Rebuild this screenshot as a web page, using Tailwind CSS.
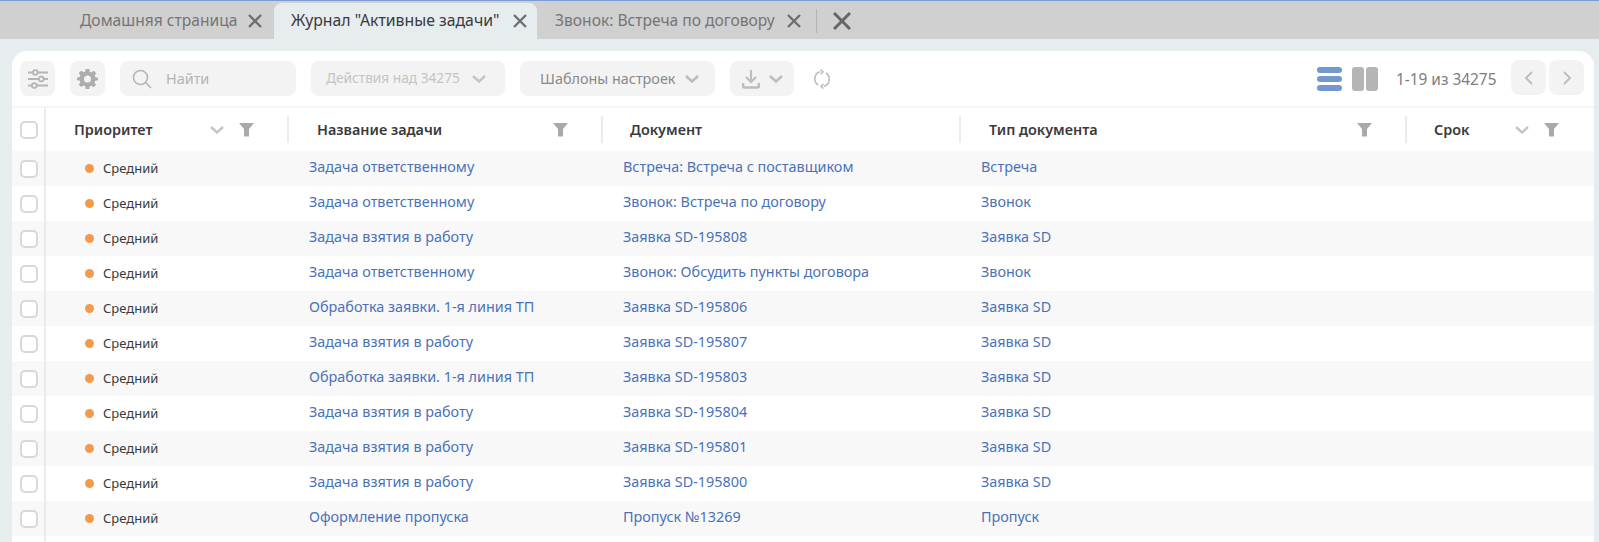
<!DOCTYPE html>
<html lang="ru">
<head>
  <meta charset="UTF-8">
  <title>Журнал</title>
  <script src="https://cdn.jsdelivr.net/npm/@tailwindcss/browser@4"></script>
</head>
<body class="bg-[#e7ecef] font-['Noto_Sans',sans-serif] h-[542px] overflow-hidden">
  <!-- Tabs -->
  <div class="h-[39px] border-t border-[#7a9bd6] bg-[#e7ecef]">
    <div class="flex h-[38px] pt-[2px] bg-[#d0d0d0] text-[15.6px] text-[#757575]">
      <div class="w-[274px] flex items-center pl-[80px] rounded-br-lg bg-[#d0d0d0]">
        <span class="w-[168px] whitespace-nowrap">Домашняя страница</span>
        <svg class="w-[14px] h-[14px]" viewBox="0 0 14 14" stroke="#6f6f6f" stroke-width="2.4"><path d="M1 1l12 12M13 1L1 13"/></svg>
      </div>
      <div class="w-[263px] flex items-center pl-[17px] rounded-t-lg bg-[#e7ecef] text-[15.8px] text-[#3a3a3a]">
        <span class="w-[222px] whitespace-nowrap">Журнал "Активные задачи"</span>
        <svg class="w-[14px] h-[14px]" viewBox="0 0 14 14" stroke="#6f6f6f" stroke-width="2.4"><path d="M1 1l12 12M13 1L1 13"/></svg>
      </div>
      <div class="flex items-center pl-[18px] rounded-bl-lg bg-[#d0d0d0]">
        <span class="w-[232px] whitespace-nowrap">Звонок: Встреча по договору</span>
        <svg class="w-[14px] h-[14px]" viewBox="0 0 14 14" stroke="#6f6f6f" stroke-width="2.4"><path d="M1 1l12 12M13 1L1 13"/></svg>
        <div class="w-px h-[24px] bg-[#b4b4b4] ml-[15px] mr-[16px]"></div>
        <svg class="w-[18px] h-[18px]" viewBox="0 0 18 18" stroke="#666" stroke-width="3"><path d="M1 1l16 16M17 1L1 17"/></svg>
      </div>
    </div>
  </div>

  <!-- Card -->
  <div class="ml-[12px] mr-[5px] mt-[12px] bg-white rounded-t-[15px] overflow-hidden h-[491px]">
    <!-- Toolbar -->
    <div class="h-[57px] border-b-2 border-[#f5f5f5] flex items-start pt-[10px] pl-[8px] pr-[10px] text-[14.4px]">
      <button class="w-[35px] h-[35px] rounded-lg bg-[#f3f3f3] flex items-center justify-center">
        <svg class="w-[20px] h-[20px]" viewBox="0 0 20 20" fill="none" stroke="#b5b5b5" stroke-width="1.8"><path d="M0 3.500h4.500M10 3.500h10M0 10h10.500M16 10h4M0 16.500h3.500M9 16.500h11"/><circle cx="7.300" cy="3.500" r="2.400"/><circle cx="13.300" cy="10" r="2.400"/><circle cx="6.300" cy="16.500" r="2.400"/></svg>
      </button>
      <button class="w-[35px] h-[35px] ml-[15px] rounded-lg bg-[#f3f3f3] flex items-center justify-center">
        <svg class="w-[21px] h-[21px]" viewBox="0 0 24 24" fill="#adadad"><path fill-rule="evenodd" d="M10 1h4l.6 3.200 1.900.8 2.700-1.800 2.800 2.800-1.800 2.700.8 1.900L24 11v3l-3.200.6-.8 1.900 1.800 2.700-2.800 2.800-2.700-1.800-1.900.8L14 24h-4l-.6-3.200-1.900-.8-2.700 1.800L2 19l1.800-2.700-.8-1.900L0 14v-3l3-.6.8-1.900L2 5.800 4.800 3l2.700 1.800 1.900-.8zM12 8.500a4 4 0 1 0 0 8 4 4 0 0 0 0-8z"/></svg>
      </button>
      <div class="w-[176px] h-[35px] ml-[15px] rounded-lg bg-[#f3f3f3] flex items-center pl-[12px] text-[#b4b4b4]">
        <svg class="w-[20px] h-[20px]" viewBox="0 0 20 20" fill="none" stroke="#b5b5b5" stroke-width="1.6"><circle cx="8.500" cy="8.500" r="7"/><path d="M13.500 13.500l5.500 5.500"/></svg>
        <span class="ml-[14px]">Найти</span>
      </div>
      <div class="w-[194px] h-[35px] ml-[15px] rounded-lg bg-[#f3f3f3] flex items-center pl-[15px] text-[13.7px] text-[#c4c4c4]">
        <span class="whitespace-nowrap">Действия над 34275</span>
        <svg class="w-[14px] h-[8px] ml-[12px]" viewBox="0 0 14 8" fill="none" stroke="#c4c4c4" stroke-width="2.400"><path d="M1 1l6 5.500L13 1"/></svg>
      </div>
      <div class="w-[195px] h-[35px] ml-[15px] rounded-lg bg-[#f3f3f3] flex items-center pl-[20px] text-[#8a8a8a]">
        <span class="whitespace-nowrap">Шаблоны настроек</span>
        <svg class="w-[14px] h-[8px] ml-[10px]" viewBox="0 0 14 8" fill="none" stroke="#bbb" stroke-width="2.400"><path d="M1 1l6 5.500L13 1"/></svg>
      </div>
      <div class="w-[64px] h-[35px] ml-[15px] rounded-lg bg-[#f3f3f3] flex items-center pl-[12px]">
        <svg class="w-[18px] h-[20px]" viewBox="0 0 18 20" fill="none" stroke="#bdbdbd" stroke-width="2.200"><path d="M9 1v11M4 8l5 5 5-5"/><path stroke-width="2.600" d="M1 14v2.500a2 2 0 0 0 2 2h12a2 2 0 0 0 2-2V14"/></svg>
        <svg class="w-[14px] h-[8px] ml-[9px]" viewBox="0 0 14 8" fill="none" stroke="#bbb" stroke-width="2.400"><path d="M1 1l6 5.500L13 1"/></svg>
      </div>
      <svg class="w-[18px] h-[20px] ml-[19px] mt-[8px]" viewBox="0 0 18 20" fill="none" stroke="#bdbdbd" stroke-width="1.600"><path d="M5 16a7.500 7.500 0 0 1 2-13.300M13 4a7.500 7.500 0 0 1-2 13.300"/><path d="M7.500 0.500L10 3 7.500 5M10.500 15L8 17.500l2.500 2"/></svg>

      <div class="ml-auto flex items-start">
        <div class="flex flex-col gap-[3px] mt-[6px] w-[25px]">
          <div class="h-[6px] rounded-[3px] bg-[#7597cf]"></div>
          <div class="h-[6px] rounded-[3px] bg-[#7597cf]"></div>
          <div class="h-[6px] rounded-[3px] bg-[#7597cf]"></div>
        </div>
        <div class="flex gap-[2px] mt-[6px] ml-[10px]">
          <div class="w-[12px] h-[24px] rounded-[3px] bg-[#b5b5b5]"></div>
          <div class="w-[12px] h-[24px] rounded-[3px] bg-[#b5b5b5]"></div>
        </div>
        <span class="ml-[18px] w-[115px] leading-[37px] text-[15.4px] text-[#7d7d7d] whitespace-nowrap">1-19 из 34275</span>
        <button class="w-[35px] h-[35px] -mt-px rounded-lg bg-[#f3f3f3] flex items-center justify-center">
          <svg class="w-[8px] h-[14px]" viewBox="0 0 8 14" fill="none" stroke="#bbb" stroke-width="1.800"><path d="M7 1L1 7l6 6"/></svg>
        </button>
        <button class="w-[35px] h-[35px] -mt-px ml-[3px] rounded-lg bg-[#f3f3f3] flex items-center justify-center">
          <svg class="w-[8px] h-[14px]" viewBox="0 0 8 14" fill="none" stroke="#bbb" stroke-width="1.800"><path d="M1 1l6 6-6 6"/></svg>
        </button>
      </div>
    </div>

    <!-- Table -->
    <div id="table" class="text-[14.4px]">
      <div class="h-[43px] grid grid-cols-[34px_243px_314px_358px_446px_1fr] items-center">
        <div class="h-full border-r-2 border-[#e7ecef] pl-[8px] flex items-center"><span class="block w-[18px] h-[18px] rounded-[5px] border-2 border-[#d8d8d8]"></span></div>
        <div class="h-[27px] border-r-2 border-[#e7ecef] flex items-center pl-[28px] pr-[33px] font-semibold text-[#3a3a3a]">
          <span class="mr-auto">Приоритет</span>
          <svg class="w-[14px] h-[8px] mr-[15px]" viewBox="0 0 14 8" fill="none" stroke="#c4c4c4" stroke-width="2.400"><path d="M1 1l6 5.500L13 1"/></svg>
          <svg class="w-[15px] h-[14px]" viewBox="0 0 15 14" fill="#a9a9a9"><path d="M0 0h15L10 6v7.500H5V6z"/></svg>
        </div>
        <div class="h-[27px] border-r-2 border-[#e7ecef] flex items-center pl-[28px] pr-[33px] font-semibold text-[#3a3a3a]">
          <span class="mr-auto">Название задачи</span>
          <svg class="w-[15px] h-[14px]" viewBox="0 0 15 14" fill="#a9a9a9"><path d="M0 0h15L10 6v7.500H5V6z"/></svg>
        </div>
        <div class="h-[27px] border-r-2 border-[#e7ecef] flex items-center pl-[27px] font-semibold text-[#3a3a3a]">Документ</div>
        <div class="h-[27px] border-r-2 border-[#e7ecef] flex items-center pl-[28px] pr-[33px] font-semibold text-[#3a3a3a]">
          <span class="mr-auto">Тип документа</span>
          <svg class="w-[15px] h-[14px]" viewBox="0 0 15 14" fill="#a9a9a9"><path d="M0 0h15L10 6v7.500H5V6z"/></svg>
        </div>
        <div class="h-[27px] flex items-center pl-[27px] pr-[35px] font-semibold text-[#3a3a3a]">
          <span class="mr-auto">Срок</span>
          <svg class="w-[14px] h-[8px] mr-[15px]" viewBox="0 0 14 8" fill="none" stroke="#c4c4c4" stroke-width="2.400"><path d="M1 1l6 5.500L13 1"/></svg>
          <svg class="w-[15px] h-[14px]" viewBox="0 0 15 14" fill="#a9a9a9"><path d="M0 0h15L10 6v7.500H5V6z"/></svg>
        </div>
      </div>
      <div id="rows"></div>
      <div class="h-[10px] w-[34px] border-r-2 border-[#e7ecef]"></div>
    </div>
  </div>

  <script>
    const tasks = [
      ['Задача ответственному', 'Встреча: Встреча с поставщиком', 'Встреча'],
      ['Задача ответственному', 'Звонок: Встреча по договору', 'Звонок'],
      ['Задача взятия в работу', 'Заявка SD-195808', 'Заявка SD'],
      ['Задача ответственному', 'Звонок: Обсудить пункты договора', 'Звонок'],
      ['Обработка заявки. 1-я линия ТП', 'Заявка SD-195806', 'Заявка SD'],
      ['Задача взятия в работу', 'Заявка SD-195807', 'Заявка SD'],
      ['Обработка заявки. 1-я линия ТП', 'Заявка SD-195803', 'Заявка SD'],
      ['Задача взятия в работу', 'Заявка SD-195804', 'Заявка SD'],
      ['Задача взятия в работу', 'Заявка SD-195801', 'Заявка SD'],
      ['Задача взятия в работу', 'Заявка SD-195800', 'Заявка SD'],
      ['Оформление пропуска', 'Пропуск №13269', 'Пропуск']
    ];

    // Stripes start on the first row
    document.getElementById('rows').innerHTML = tasks.map((t, i) => `
      <div class="h-[35px] grid grid-cols-[34px_243px_314px_358px_446px_1fr] items-center ${i % 2 === 0 ? 'bg-[#f8f8f8]' : 'bg-white'}">
        <div class="h-full border-r-2 border-[#e7ecef] pl-[8px] flex items-center"><span class="block w-[18px] h-[18px] rounded-[5px] border-2 border-[#d8d8d8] bg-white"></span></div>
        <div class="pl-[39px] flex items-center text-[13px] text-[#3a3a3a]"><span class="w-[9px] h-[9px] rounded-full bg-[#f59a4a] mr-[9px]"></span>Средний</div>
        <div class="pl-[20px] pb-[3px] text-[#4a72b8] whitespace-nowrap">${t[0]}</div>
        <div class="pl-[20px] pb-[3px] text-[#4a72b8] whitespace-nowrap">${t[1]}</div>
        <div class="pl-[20px] pb-[3px] text-[#4a72b8] whitespace-nowrap">${t[2]}</div>
        <div></div>
      </div>`).join('');
  </script>
</body>
</html>
